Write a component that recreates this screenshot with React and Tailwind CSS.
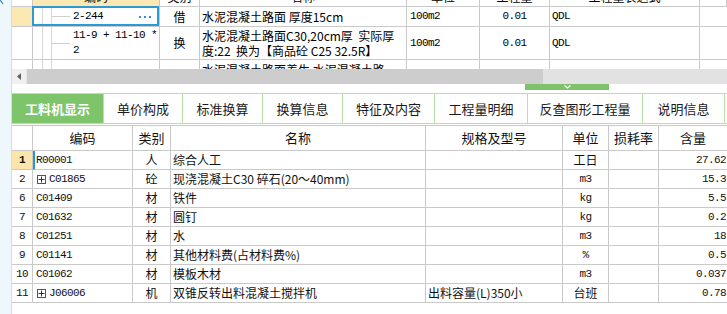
import React from 'react';

// 字体：代码/数字用等宽，中文用 Noto CJK
const MONO = "font-['Liberation_Mono',monospace] text-[11px] tracking-[-0.6px]";
const CJK = "font-['Noto_Sans_CJK_SC',sans-serif] text-[12px]";
const LINE = 'border-[#c9c9c9]';

const topCols = 'grid grid-cols-[21px_127px_40px_207px_73px_70px_150px_1fr]';
const bottomCols = 'grid grid-cols-[21px_100px_38px_255px_137px_46px_50px_1fr]';

const topHeader = ['', '编码', '类别', '名称', '单位', '工程量', '工程量表达式', ''];

const topRows = [
  {
    code: ['2-244'],
    type: '借',
    name: ['水泥混凝土路面 厚度15cm'],
    unit: '100m2',
    qty: '0.01',
    expr: 'QDL',
    height: 'h-[20px]',
    selected: true,
  },
  {
    code: ['11-9 + 11-10 *', '2'],
    type: '换',
    name: ['水泥混凝土路面C30,20cm厚  实际厚', '度:22  换为【商品砼 C25 32.5R】'],
    unit: '100m2',
    qty: '0.01',
    expr: 'QDL',
    height: 'h-[33px]',
  },
  {
    code: [''],
    type: '',
    name: ['水泥混凝土路面养生 水泥混凝土路'],
    unit: '',
    qty: '',
    expr: '',
    height: 'h-[20px]',
  },
];

const tabs = [
  { label: '工料机显示', w: 'w-[92px]', active: true },
  { label: '单价构成', w: 'w-[79px]' },
  { label: '标准换算', w: 'w-[80px]' },
  { label: '换算信息', w: 'w-[80px]' },
  { label: '特征及内容', w: 'w-[92px]' },
  { label: '工程量明细', w: 'w-[93px]' },
  { label: '反查图形工程量', w: 'w-[115px]' },
  { label: '说明信息', w: 'w-[82px]' },
];

const headers = ['', '编码', '类别', '名称', '规格及型号', '单位', '损耗率', '含量'];

const rows = [
  { no: '1', code: 'R00001', type: '人', name: '综合人工', spec: '', unit: '工日', qty: '27.62' },
  { no: '2', code: 'C01865', expand: true, type: '砼', name: '现浇混凝土C30 碎石(20～40mm)', spec: '', unit: 'm3', qty: '15.3' },
  { no: '6', code: 'C01409', type: '材', name: '铁件', spec: '', unit: 'kg', qty: '5.5' },
  { no: '7', code: 'C01632', type: '材', name: '圆钉', spec: '', unit: 'kg', qty: '0.2' },
  { no: '8', code: 'C01251', type: '材', name: '水', spec: '', unit: 'm3', qty: '18' },
  { no: '9', code: 'C01141', type: '材', name: '其他材料费(占材料费%)', spec: '', unit: '%', qty: '0.5' },
  { no: '10', code: 'C01062', type: '材', name: '模板木材', spec: '', unit: 'm3', qty: '0.037' },
  { no: '11', code: 'J06006', expand: true, type: '机', name: '双锥反转出料混凝土搅拌机', spec: '出料容量(L)350小', unit: '台班', qty: '0.78' },
];

const isCjk = (s) => /[\u4e00-\u9fff]/.test(s);

const ExpandBox = () => (
  <span className="mr-[3px] flex h-[9px] w-[9px] shrink-0 items-center justify-center border border-[#555]">
    <svg width="7" height="7" viewBox="0 0 7 7">
      <path d="M0.5 3.5h6M3.5 0.5v6" stroke="#333" strokeWidth="1" />
    </svg>
  </span>
);

const TopGrid = () => (
  <div className="h-[69px] overflow-hidden">
    {/* 表头只露出底部 */}
    <div className={`${topCols} -mt-[13px] h-[20px]`}>
      {topHeader.map((h, i) => (
        <div
          key={i}
          className={`flex items-center justify-center border-r border-b ${LINE} ${CJK} ${
            i === 1 ? 'bg-[#fce8b2]' : 'bg-white'
          }`}
        >
          {h}
        </div>
      ))}
    </div>
    {topRows.map((r, idx) => (
      <div key={idx} className={`${topCols} ${r.height}`}>
        <div className={`border-r border-b ${LINE} ${r.selected ? 'bg-[#fce8b2]' : 'bg-white'}`} />
        <div className={`relative flex border-r border-b ${LINE}`}>
          <div className="w-[10px] shrink-0 border-r border-[#d6d6d6]" />
          <div className="w-[9px] shrink-0 border-r border-[#d6d6d6]" />
          <div className="flex w-[18px] shrink-0 items-center">
            {r.code[0] !== '' && <div className="h-px w-full bg-[#cfcfcf]" />}
          </div>
          <div className={`flex flex-1 flex-col justify-center pl-[3px] leading-[15px] ${MONO}`}>
            {r.code.map((c, i) => (
              <div key={i} className="whitespace-pre">{c}</div>
            ))}
          </div>
          {r.selected && (
            <>
              <div className="mr-[8px] flex items-center gap-[3px]">
                <span className="h-[2px] w-[2px] bg-[#2f8fd6]" />
                <span className="h-[2px] w-[2px] bg-[#2f8fd6]" />
                <span className="h-[2px] w-[2px] bg-[#2f8fd6]" />
              </div>
              <div className="absolute -top-px -left-px right-0 bottom-0 border-2 border-[#2b9ad6]" />
            </>
          )}
        </div>
        <div className={`flex items-center justify-center border-r border-b ${LINE} ${CJK}`}>{r.type}</div>
        <div className={`flex flex-col justify-center overflow-hidden border-r border-b ${LINE} pl-[2px] leading-[15px] ${CJK}`}>
          {r.name.map((n, i) => (
            <div key={i} className="whitespace-pre">{n}</div>
          ))}
        </div>
        <div className={`flex items-center border-r border-b ${LINE} pl-[3px] ${MONO}`}>{r.unit}</div>
        <div className={`flex items-center justify-center border-r border-b ${LINE} ${MONO}`}>{r.qty}</div>
        <div className={`flex items-center border-r border-b ${LINE} pl-[2px] ${MONO}`}>{r.expr}</div>
        <div className={`border-b ${LINE}`} />
      </div>
    ))}
  </div>
);

const ScrollBar = () => (
  <div className="flex h-[15px]">
    <div className="flex w-[14px] items-center justify-center bg-[#f0f0f0]">
      <svg width="4" height="7" viewBox="0 0 4 7">
        <path d="M4 0L0 3.5L4 7Z" fill="#606060" />
      </svg>
    </div>
    <div className="w-px bg-[#e6e6e6]" />
    <div className="w-[516px] bg-[#cdcdcd]" />
    <div className="flex-1 bg-[#e2e2e2]" />
  </div>
);

const Splitter = () => (
  <div className="h-[9px] bg-white">
    <div className="ml-[513px] flex h-[6px] w-[84px] items-center justify-center bg-[#7ec36b]">
      <svg width="7" height="4" viewBox="0 0 7 4">
        <path d="M0.5 0.5L3.5 3L6.5 0.5" stroke="#ffffff" strokeWidth="1.2" fill="none" />
      </svg>
    </div>
  </div>
);

const TabBar = () => (
  <div className="flex h-[31px] border-y border-[#b6e2a5] bg-white">
    {tabs.map((t) => (
      <div
        key={t.label}
        className={`flex ${t.w} shrink-0 items-center justify-center border-r border-[#b6e2a5] font-['Noto_Sans_CJK_SC',sans-serif] text-[13px] ${
          t.active ? 'bg-[#7ec46b] font-bold text-white' : 'text-[#1a1a1a]'
        }`}
      >
        {t.label}
      </div>
    ))}
  </div>
);

const BottomGrid = () => (
  <div className="mt-px">
    <div className={`${bottomCols} h-[26px] border-y ${LINE}`}>
      {headers.map((h, i) => (
        <div
          key={i}
          className={`flex items-center justify-center ${i < headers.length - 1 ? 'border-r' : ''} ${LINE} font-['Noto_Sans_CJK_SC',sans-serif] text-[13px] text-[#111]`}
        >
          {h}
        </div>
      ))}
    </div>
    {rows.map((r, idx) => {
      const first = idx === 0;
      return (
        <div key={r.no} className={`${bottomCols} h-[19px] leading-[18px] text-[#111]`}>
          <div
            className={`flex items-center justify-center border-r border-b ${LINE} ${MONO} ${
              first ? 'bg-[#fce5ab] font-bold' : 'bg-white'
            }`}
          >
            {r.no}
          </div>
          <div
            className={`flex items-center overflow-hidden border-r border-b ${LINE} ${MONO} ${
              first ? 'border-l-2 border-l-[#2c95d6] pl-[1px]' : 'pl-[3px]'
            } ${r.expand ? 'pl-[4px]' : ''}`}
          >
            {r.expand && <ExpandBox />}
            {r.code}
          </div>
          <div className={`flex items-center justify-center border-r border-b ${LINE} ${CJK}`}>{r.type}</div>
          <div className={`flex items-center overflow-hidden whitespace-nowrap border-r border-b ${LINE} pl-[2px] ${CJK}`}>
            {r.name}
          </div>
          <div className={`flex items-center overflow-hidden whitespace-nowrap border-r border-b ${LINE} pl-[2px] ${CJK}`}>
            {r.spec}
          </div>
          <div
            className={`flex items-center justify-center border-r border-b ${LINE} ${isCjk(r.unit) ? CJK : MONO}`}
          >
            {r.unit}
          </div>
          <div className={`border-r border-b ${LINE}`} />
          <div className={`flex items-center justify-end border-b ${LINE} pr-px ${MONO}`}>{r.qty}</div>
        </div>
      );
    })}
  </div>
);

export default function App() {
  return (
    <div className="flex h-[314px] w-[727px] overflow-hidden bg-white">
      <div className="relative w-[12px] shrink-0 border-r border-[#d0dde2] bg-[#eef8fc]">
        <svg className="absolute top-0 left-0" width="4" height="5" viewBox="0 0 4 5">
          <path d="M0 0L3 4" stroke="#3a86c8" strokeWidth="1.2" />
        </svg>
      </div>
      <div className="flex min-w-0 flex-1 flex-col">
        <TopGrid />
        <ScrollBar />
        <Splitter />
        <TabBar />
        <BottomGrid />
      </div>
    </div>
  );
}
